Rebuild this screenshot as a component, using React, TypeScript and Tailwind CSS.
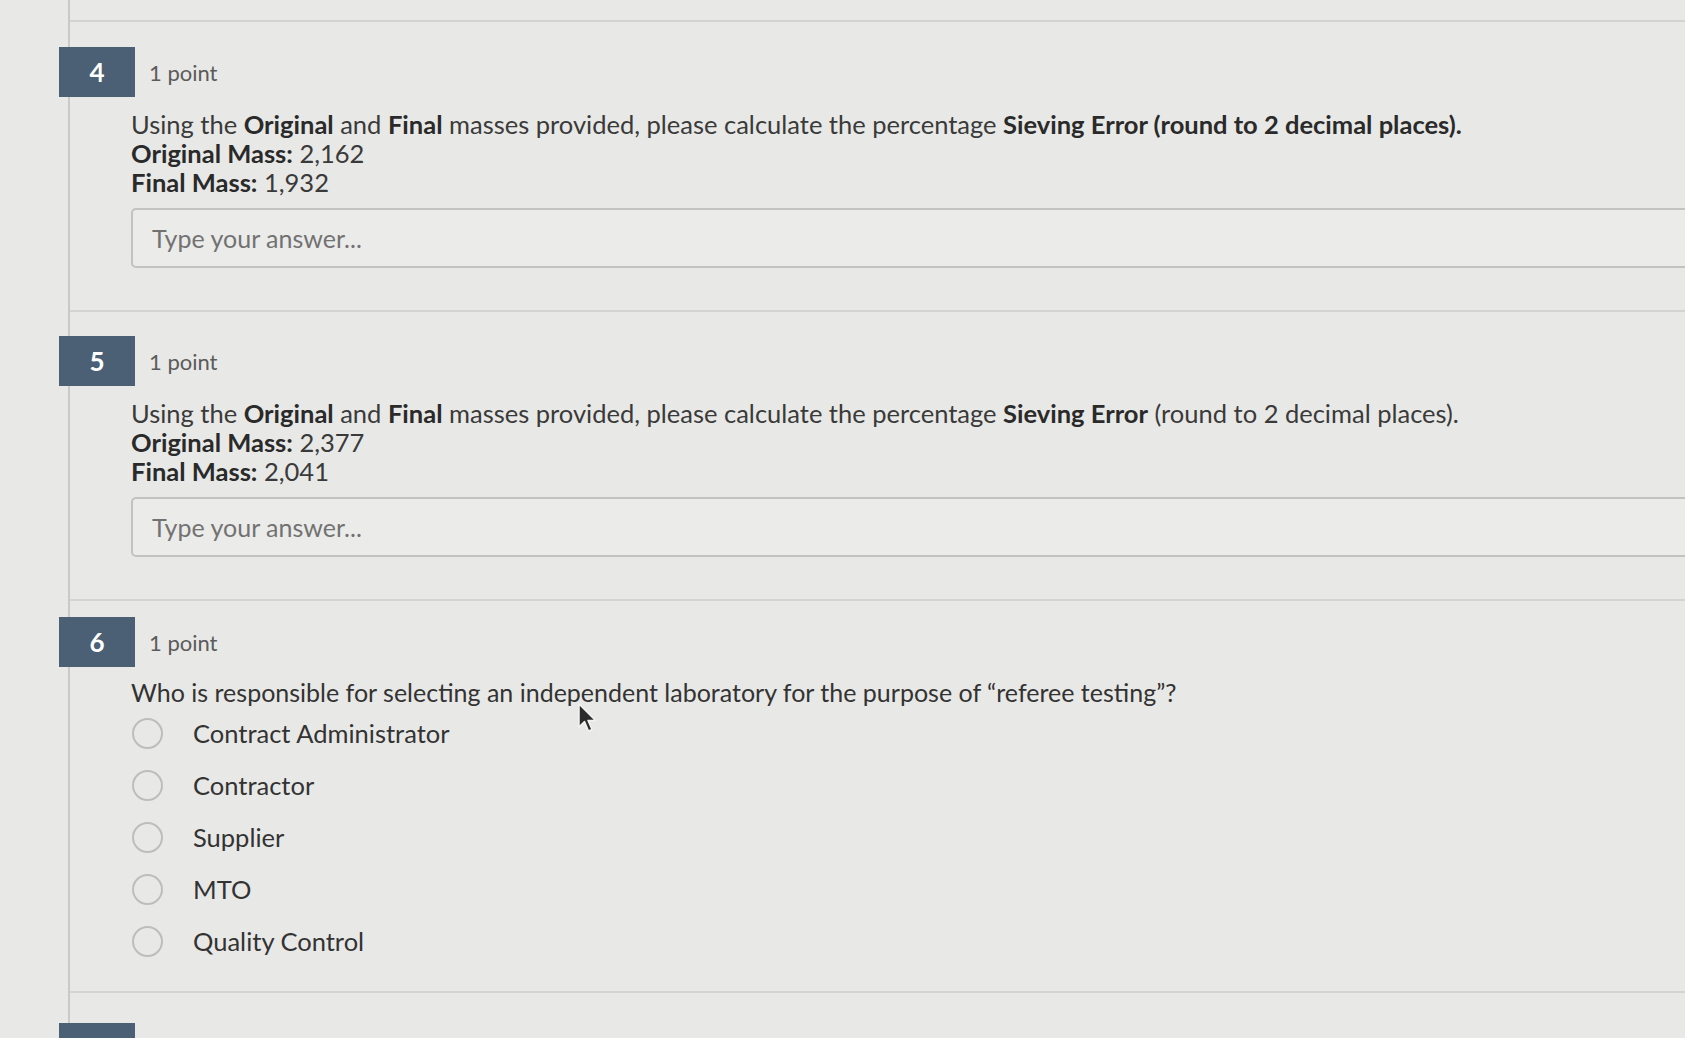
import { ReactNode } from 'react';

const font = { fontFamily: 'Lato, "Open Sans", sans-serif' };

function Badge({ n }: { n?: number }) {
  return (
    <div className="-ml-[11px] flex h-[50px] w-[76px] shrink-0 items-center justify-center bg-[#4b6075] text-[26px] font-bold text-white">
      {n}
    </div>
  );
}

function Header({ n }: { n: number }) {
  return (
    <div className="flex items-center">
      <Badge n={n} />
      <span className="ml-[14px] text-[22px] text-[#5b5b5b]">1 point</span>
    </div>
  );
}

function Answer() {
  return (
    <div className="mt-[11px] flex h-[60px] w-[1620px] items-center rounded-[5px] border-2 border-[#c2c2c0] bg-[#ebebe9] pl-[19px] text-[25px] text-[#727272]">
      Type your answer...
    </div>
  );
}

function MassQuestion({
  n,
  original,
  final,
  boldParen,
  top,
}: {
  n: number;
  original: string;
  final: string;
  boldParen: boolean;
  top: string;
}) {
  return (
    <section className={`border-b-2 border-[#d3d3d1] pb-[42px] ${top}`}>
      <Header n={n} />
      <div className="mt-[13px] pl-[61px] text-[25.5px] leading-[29px] text-[#3a3a3a]">
        <p>
          Using the <b className="text-[#2a2a2a]">Original</b> and <b className="text-[#2a2a2a]">Final</b> masses provided, please calculate the percentage{' '}
          {boldParen ? (
            <b className="text-[#2a2a2a]">Sieving Error (round to 2 decimal places).</b>
          ) : (
            <>
              <b className="text-[#2a2a2a]">Sieving Error</b> (round to 2 decimal places).
            </>
          )}
        </p>
        <p>
          <b className="text-[#2a2a2a]">Original Mass:</b> {original}
        </p>
        <p>
          <b className="text-[#2a2a2a]">Final Mass:</b> {final}
        </p>
        <Answer />
      </div>
    </section>
  );
}

function Option({ children }: { children: ReactNode }) {
  return (
    <div className="flex h-[52px] items-center">
      <span className="h-[31px] w-[31px] shrink-0 rounded-full border-2 border-[#bdbdbb]" />
      <span className="ml-[30px] text-[25.5px] text-[#333]">{children}</span>
    </div>
  );
}

export default function App() {
  const options = ['Contract Administrator', 'Contractor', 'Supplier', 'MTO', 'Quality Control'];
  return (
    <div className="relative h-[1038px] w-full overflow-hidden bg-[#e8e8e6]" style={font}>
      <div className="ml-[68px] h-full border-l-2 border-[#c9c9c7]">
        <div className="h-[22px] border-b-2 border-[#d3d3d1]" />
        <MassQuestion n={4} original="2,162" final="1,932" boldParen top="pt-[25px]" />
        <MassQuestion n={5} original="2,377" final="2,041" boldParen={false} top="pt-[24px]" />

        <section className="border-b-2 border-[#d3d3d1] pb-[24px] pt-[16px]">
          <Header n={6} />
          <div className="pl-[61px]">
            <p className="mt-[11px] text-[25px] leading-[29px] text-[#333]">
              Who is responsible for selecting an independent laboratory for the purpose of “referee testing”?
            </p>
            <div className="pl-[1px]">
              {options.map((o) => (
                <Option key={o}>{o}</Option>
              ))}
            </div>
          </div>
        </section>
        <div className="pt-[30px]">
          <Badge />
        </div>
      </div>

      {/* mouse pointer */}
      <svg className="absolute left-[578px] top-[703px]" width="20" height="30" viewBox="0 0 20 30">
        <path d="M1 1 L1 24 L6.5 18.5 L10.5 28 L14 26.5 L10 17.5 L17.5 17.5 Z" fill="#2b2b2b" stroke="#f2f2f2" strokeWidth="1.5" strokeLinejoin="round" />
      </svg>
    </div>
  );
}
